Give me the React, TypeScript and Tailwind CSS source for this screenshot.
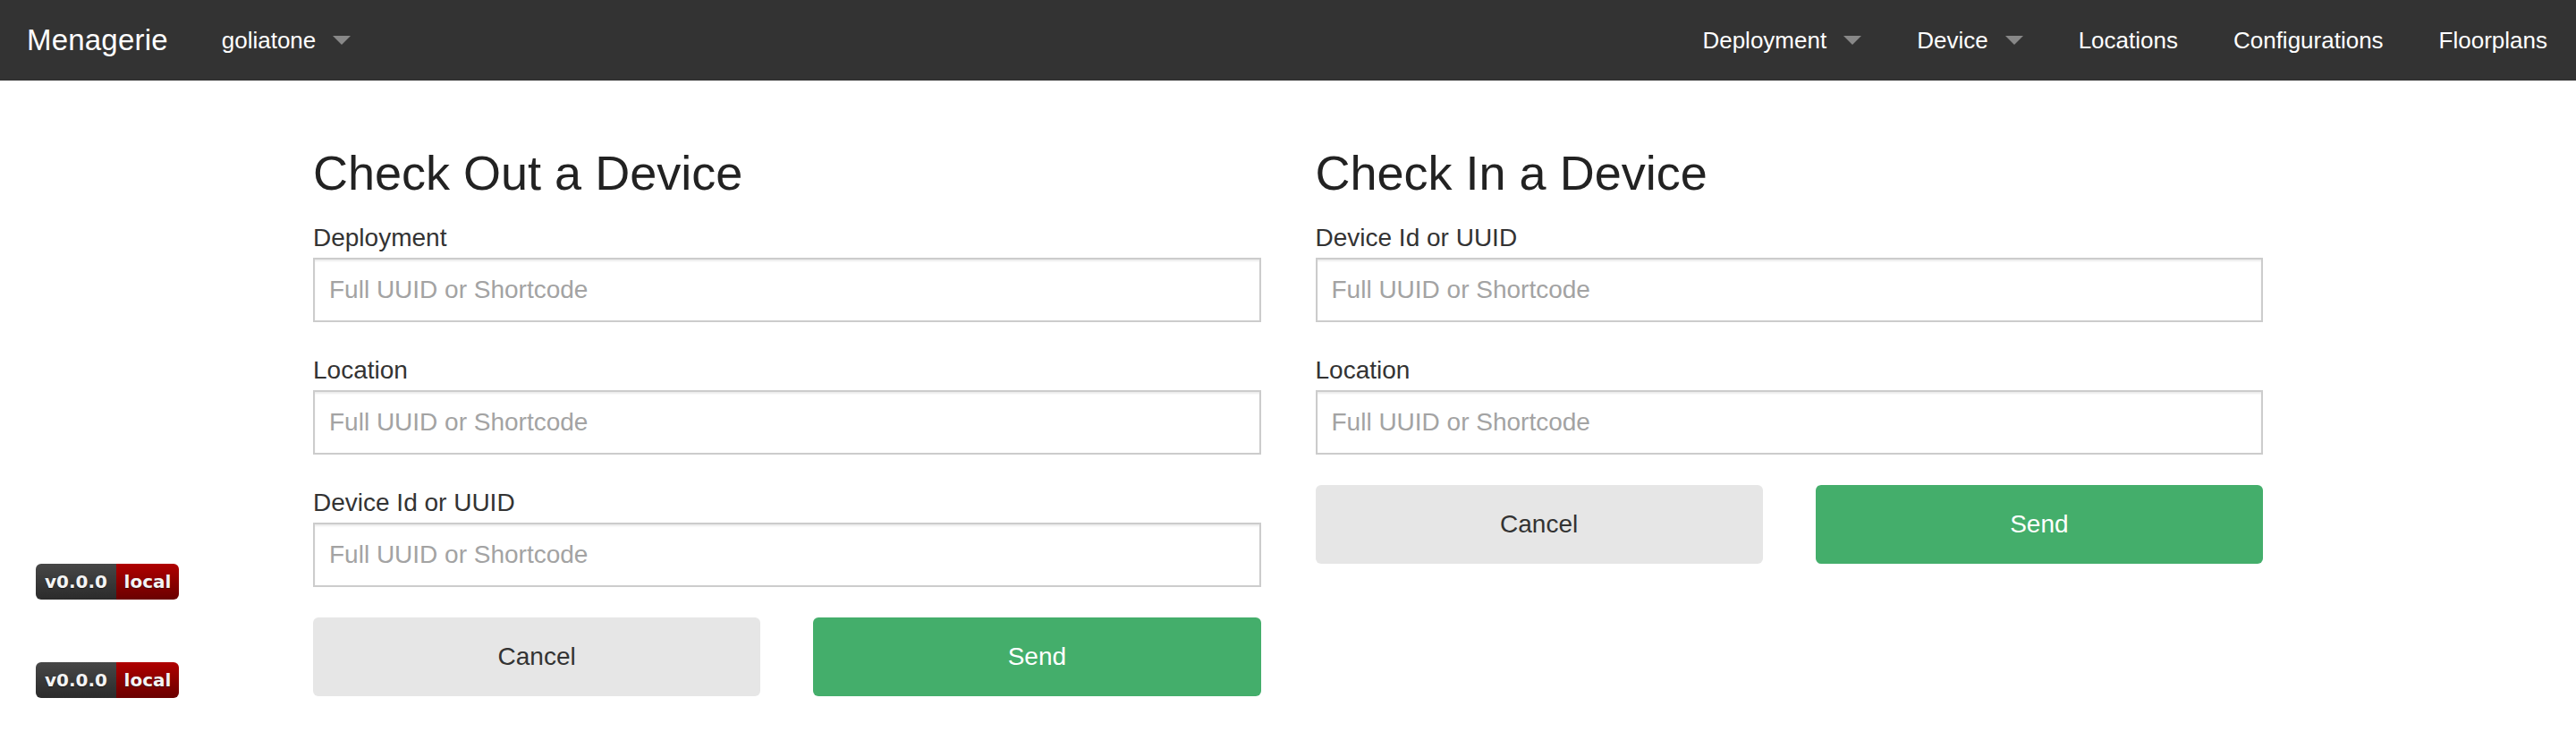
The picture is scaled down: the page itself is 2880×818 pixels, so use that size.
import React from "react";

const Caret = () => (
  <svg width="20" height="10" viewBox="0 0 20 10" className="ml-[19px] shrink-0">
    <path d="M0 0 L20 0 L10 10 Z" fill="#888" />
  </svg>
);

function Field({ label }: { label: string }) {
  return (
    <div className="mb-[34px]">
      <label className="block text-[28px] leading-[40px] text-[#333] mb-[2px]">{label}</label>
      <input
        type="text"
        placeholder="Full UUID or Shortcode"
        className="block w-full h-[72px] px-4 border-2 border-[#ccc] bg-white text-[28px] text-[#555] placeholder:text-[#a3a3a3] shadow-[inset_0_2px_2px_rgba(0,0,0,0.075)] outline-none"
      />
    </div>
  );
}

function Actions() {
  return (
    <div className="grid grid-cols-2 gap-x-[59px]">
      <button className="h-[88px] rounded-[6px] bg-[#e6e6e6] text-[28px] text-[#333]">Cancel</button>
      <button className="h-[88px] rounded-[6px] bg-[#44ae6b] text-[28px] text-white">Send</button>
    </div>
  );
}

function Badge() {
  return (
    <div className="flex h-[40px] rounded-[6px] overflow-hidden text-[20px] font-bold text-[#f4f4f4] font-['DejaVu_Sans',sans-serif] [text-shadow:0_1px_1px_rgba(0,0,0,0.5)]">
      <span className="w-[90px] flex items-center justify-center bg-gradient-to-b from-[#474747] to-[#2b2b2b]">v0.0.0</span>
      <span className="w-[70px] flex items-center justify-center bg-gradient-to-b from-[#b00000] to-[#6a0000]">local</span>
    </div>
  );
}

export default function App() {
  const navItems = [
    { label: "Deployment", caret: true },
    { label: "Device", caret: true },
    { label: "Locations", caret: false },
    { label: "Configurations", caret: false },
    { label: "Floorplans", caret: false },
  ];

  return (
    <div className="relative min-h-[818px] bg-white font-['Liberation_Sans',Arial,sans-serif]">
      {/* Navbar */}
      <nav className="h-[90px] bg-[#333] flex items-center justify-between text-white">
        <div className="flex items-center">
          <span className="pl-[30px] pr-[30px] text-[33px] tracking-[0.2px]">Menagerie</span>
          <span className="flex items-center px-[30px] text-[26px]">
            goliatone
            <Caret />
          </span>
        </div>
        <ul className="flex items-center pr-[1px]">
          {navItems.map((item) => (
            <li key={item.label} className="flex items-center px-[31px] text-[26px]">
              {item.label}
              {item.caret && <Caret />}
            </li>
          ))}
        </ul>
      </nav>

      {/* Content */}
      <main className="w-[2180px] mx-auto pt-[74px] grid grid-cols-2 gap-x-[61px]">
        <section>
          <h1 className="text-[54px] leading-[59px] text-[#222] mb-[23px]">Check Out a Device</h1>
          <Field label="Deployment" />
          <Field label="Location" />
          <Field label="Device Id or UUID" />
          <Actions />
        </section>
        <section>
          <h1 className="text-[54px] leading-[59px] text-[#222] mb-[23px]">Check In a Device</h1>
          <Field label="Device Id or UUID" />
          <Field label="Location" />
          <Actions />
        </section>
      </main>

      {/* Version badges */}
      <div className="absolute left-[40px] top-[630px]">
        <Badge />
      </div>
      <div className="absolute left-[40px] top-[740px]">
        <Badge />
      </div>
    </div>
  );
}
